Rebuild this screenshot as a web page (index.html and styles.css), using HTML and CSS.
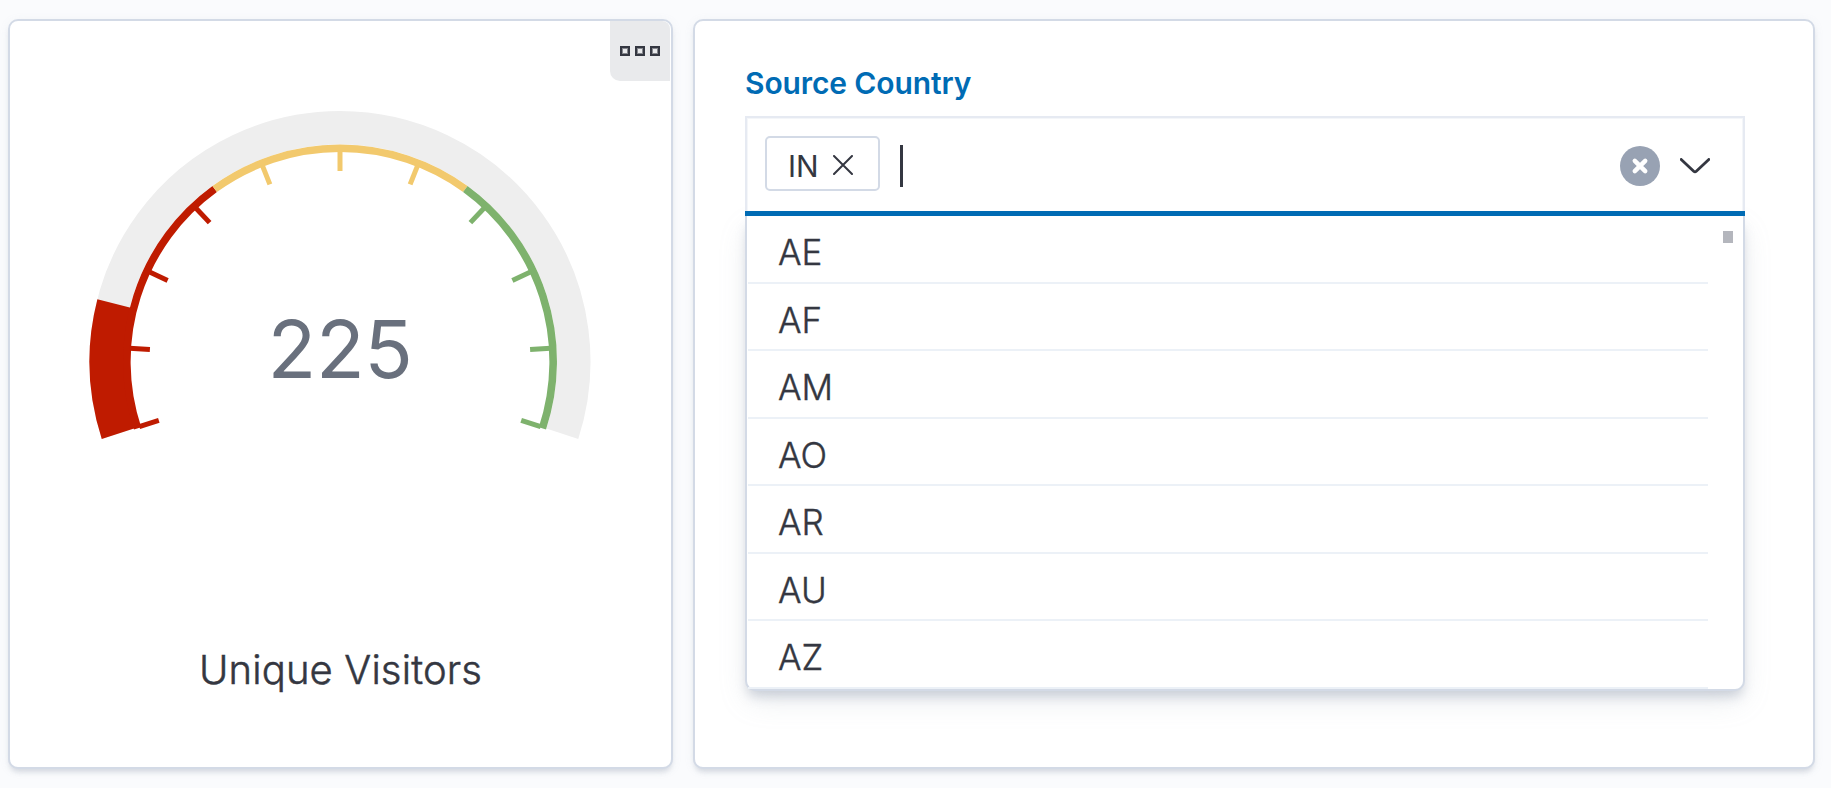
FILE: index.html
```html
<!DOCTYPE html>
<html lang="en">
<head>
<meta charset="utf-8">
<title>Dashboard</title>
<link rel="stylesheet" href="styles.css">
</head>
<body>
<main class="dashboard">
  <section class="panel gauge-panel">
    <button class="panel-menu" aria-label="Panel options"><i></i><i></i><i></i></button>
    <svg class="gauge" width="504" height="330" viewBox="-252 -251.5 504 330">
      <path class="track" pathLength="216" d="M-222.32 72.24A233.75 233.75 0 1 1 222.32 72.24"/>
      <path class="value" pathLength="216" d="M-221.36 71.93A232.75 232.75 0 1 1 221.36 71.93"/>
      <g class="scale">
        <path class="red" d="M-202.4 66.9A213.2 213.2 0 0 1 -125.3 -172.5"/>
        <path class="yellow" d="M-125.3 -172.5A213.2 213.2 0 0 1 125.3 -172.5"/>
        <path class="green" d="M125.3 -172.5A213.2 213.2 0 0 1 202.4 66.9"/>
      </g>
      <g class="ticks">
        <path class="red" transform="rotate(-108)" d="M0-190.5V-211"/>
        <path class="red" transform="rotate(-86.4)" d="M0-190.5V-211"/>
        <path class="red" transform="rotate(-64.8)" d="M0-190.5V-211"/>
        <path class="red" transform="rotate(-43.2)" d="M0-190.5V-211"/>
        <path class="yellow" transform="rotate(-21.6)" d="M0-190.5V-211"/>
        <path class="yellow" d="M0-190.5V-211"/>
        <path class="yellow" transform="rotate(21.6)" d="M0-190.5V-211"/>
        <path class="green" transform="rotate(43.2)" d="M0-190.5V-211"/>
        <path class="green" transform="rotate(64.8)" d="M0-190.5V-211"/>
        <path class="green" transform="rotate(86.4)" d="M0-190.5V-211"/>
        <path class="green" transform="rotate(108)" d="M0-190.5V-211"/>
      </g>
      <text class="gauge-value" x="0" y="16.5">225</text>
    </svg>
    <div class="gauge-label">Unique Visitors</div>
  </section>

  <section class="panel control-panel">
    <label class="control-label">Source Country</label>
    <div class="combo">
      <div class="combo-input">
        <span class="pill"><span>IN</span>
          <svg width="20" height="20" viewBox="0 0 20 20"><path d="M1 1L19 19M19 1L1 19"/></svg>
        </span>
        <span class="caret"></span>
        <svg class="clear" width="40" height="40" viewBox="0 0 40 40"><circle cx="20" cy="20" r="20"/><path d="M14.8 14.8L25.2 25.2M25.2 14.8L14.8 25.2"/></svg>
        <svg class="chevron" width="30" height="16" viewBox="0 0 30 16"><path d="M1.2 1.4L13.7 13.3Q15 14.5 16.3 13.3L28.8 1.4"/></svg>
      </div>
      <div class="options">
        <ul class="option-list">
          <li>AE</li><li>AF</li><li>AM</li><li>AO</li><li>AR</li><li>AU</li><li>AZ</li>
        </ul>
        <span class="scroll-thumb"></span>
      </div>
    </div>
  </section>
</main>
</body>
</html>
```
FILE: styles.css
```css
* { box-sizing: border-box; }

body {
  margin: 0;
  height: 788px;
  overflow: hidden;
  background: #fafbfd;
  color: #343741;
  font-family: Inter, "Liberation Sans", sans-serif;
}

.dashboard {
  display: grid;
  grid-template-columns: 665px 1122px;
  grid-template-rows: 750px;
  gap: 20px;
  padding: 19px 16px 19px 8px;
}

.panel {
  position: relative;
  background: #fff;
  border: 2px solid #d3dae6;
  border-radius: 10px;
  box-shadow: 0 5px 5px -2px rgba(152, 162, 179, .3), 0 2px 12px -4px rgba(152, 162, 179, .3);
}

.gauge-panel {
  display: flex;
  flex-direction: column;
  align-items: center;
  padding-top: 89px;
}

.panel-menu {
  position: absolute;
  top: 0;
  right: 1px;
  display: flex;
  align-items: center;
  justify-content: center;
  gap: 5px;
  width: 60px;
  height: 60px;
  padding: 0;
  border: 0;
  border-radius: 0 8px 0 10px;
  background: #e9eaec;
}

.panel-menu i {
  width: 10px;
  height: 10px;
  border: 2px solid #343741;
  box-shadow: inset 0 0 0 1px #85878d;
}

.gauge { flex: none; fill: none; margin-left: -1px; }
.track { stroke: #eee; stroke-width: 33.5; }
.value { stroke: #bf1b00; stroke-width: 35.5; stroke-dasharray: 32.4 400; }
.scale { stroke-width: 7.6; }
.ticks { stroke-width: 5; }
.red { stroke: #bf1b00; }
.yellow { stroke: #f2c96d; }
.green { stroke: #7eb26d; }

.gauge-value {
  fill: #69707d;
  font-size: 80px;
  letter-spacing: -.4px;
  text-anchor: middle;
}

.gauge-label {
  margin-top: 200px;
  font-size: 40px;
  font-weight: 300;
  letter-spacing: .14px;
  line-height: 60px;
  -webkit-text-stroke: .5px #343741;
}

.control-panel { padding: 44px 68px 0 50px; }

.control-label {
  display: block;
  height: 51px;
  color: #006bb4;
  font-size: 30px;
  font-weight: 600;
  letter-spacing: -.12px;
  line-height: 36px;
}

.combo {
  width: 1000px;
}

.combo-input {
  position: relative;
  z-index: 1;
  display: flex;
  align-items: center;
  height: 100px;
  padding: 0 33px 3px 18px;
  border: 2px solid #e6eaf2;
  border-bottom: 0;
  background: #fff;
  box-shadow: inset 0 0 0 1px #f4f6f9;
}

.combo-input::after {
  content: "";
  position: absolute;
  left: -2px;
  right: -2px;
  bottom: 0;
  height: 5px;
  background: #006bb4;
}

.pill {
  display: flex;
  align-items: center;
  justify-content: space-between;
  width: 115px;
  height: 55px;
  padding: 2px 25px 0 21px;
  margin-bottom: 4px;
  border: 2px solid #d3dae6;
  border-radius: 5px;
  background: #fff;
  font-size: 30px;
}

.pill span { padding-top: 2px; }
.pill svg { stroke: #343741; stroke-width: 2; stroke-linecap: round; }

.caret {
  width: 3px;
  height: 42px;
  margin: 0 auto 0 20px;
  background: #343741;
}

.clear { fill: #98a2b3; stroke-width: 4.5; stroke-linecap: round; }
.clear path { stroke: #fff; }
.chevron { margin-left: 20px; fill: none; stroke: #343741; stroke-width: 2.8; stroke-linecap: round; }

.options {
  display: flex;
  justify-content: space-between;
  height: 475px;
  padding: 0 10px 0 1px;
  border: 2px solid #d3dae6;
  border-top: 0;
  border-radius: 0 0 10px 10px;
  background: #fff;
  box-shadow: 0 12px 30px -4px rgba(152, 162, 179, .22), 0 8px 12px -3px rgba(152, 162, 179, .45);
}

.option-list {
  width: 960px;
  margin: 0;
  padding: 0;
  list-style: none;
  font-size: 35px;
  font-weight: 300;
  -webkit-text-stroke: .4px #343741;
}

.option-list li {
  height: 67.5px;
  padding-left: 30px;
  border-bottom: 2px solid #ecf1f7;
  line-height: 73px;
}

.scroll-thumb {
  width: 10px;
  height: 12px;
  margin-top: 15px;
  background: #b4b6bd;
}
```
